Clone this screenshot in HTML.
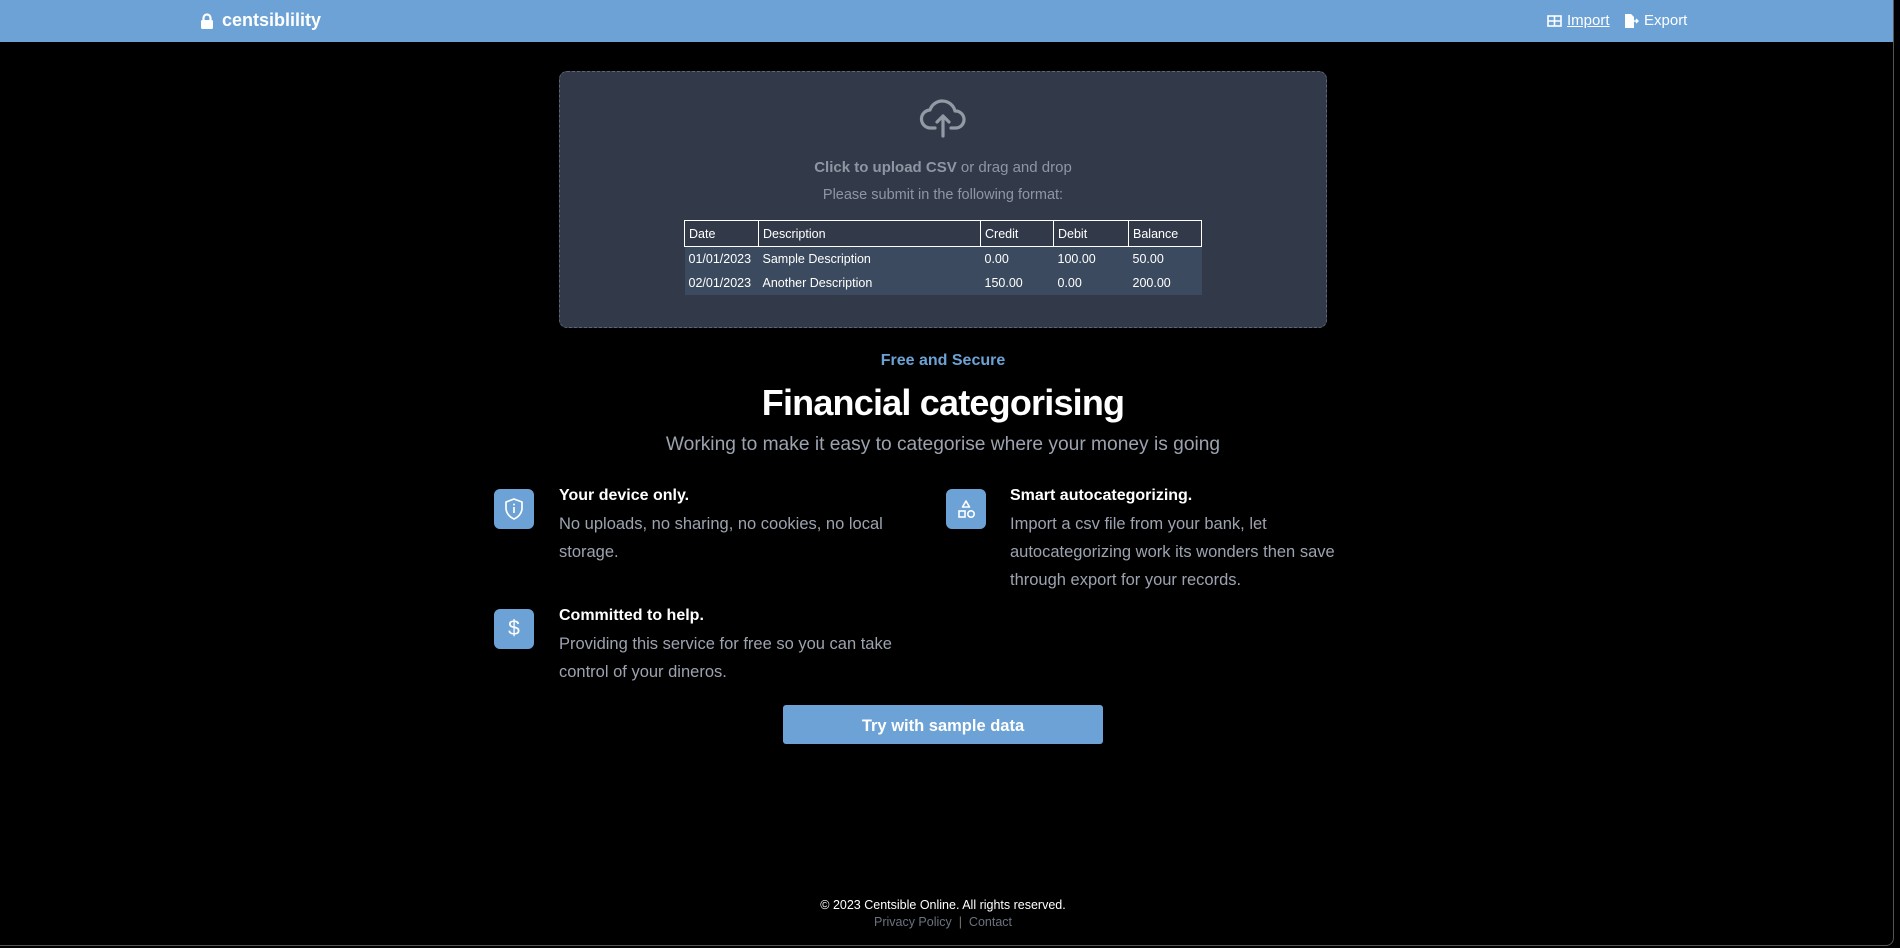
<!DOCTYPE html>
<html><head><meta charset="utf-8">
<style>
*{margin:0;padding:0;box-sizing:border-box}
html,body{width:1900px;height:948px;background:#000;overflow:hidden;font-family:"Liberation Sans",sans-serif}
.abs{position:absolute}
.hdr{left:0;top:0;width:1893px;height:42px;background:#6ca2d5}
.frame{left:0;top:0;width:1894px;height:946px;border-right:1px solid #555;border-bottom:1px solid #555;border-bottom-right-radius:8px;pointer-events:none}
.logo{left:200px;top:10px;color:#fff;font-weight:bold;font-size:18px;display:flex;align-items:center;gap:8px}
.nav{top:12px;color:#fff;font-size:15px;display:flex;align-items:center;gap:5px}
.box{left:559px;top:71px;width:768px;height:257px;background:#323a49;border:1px dashed #5b6577;border-radius:8px}
.c{text-align:center;width:1886px;left:0}
table{border-collapse:collapse;font-size:12.5px;color:#fff}
th{border:1px solid #fff;text-align:left;font-weight:normal;padding:0 4px;height:26px;background:#323a49}
td{background:#3b4a5e;padding:0 4px;height:24px;white-space:nowrap}
.ic{width:40px;height:40px;background:#6ca2d5;border-radius:6px;display:flex;align-items:center;justify-content:center}
.ft{font-size:16px;color:#fff;font-weight:bold}
.fd{font-size:16.5px;color:#9ca3af;line-height:28px;width:370px}
</style></head><body>
<div class="abs hdr"></div>
<div class="abs logo"><svg width="14" height="16" viewBox="0 0 14 16"><path d="M3.5 7V5a3.5 3.5 0 0 1 7 0v2" fill="none" stroke="#fff" stroke-width="2.2"/><rect x="1" y="7" width="12" height="9" rx="1.5" fill="#fff"/></svg>centsiblility</div>
<div class="abs nav" style="left:1547px"><svg width="15" height="12" viewBox="0 0 15 12"><rect x="1" y="1" width="13" height="10" fill="none" stroke="#fff" stroke-width="1.6"/><path d="M1 6h13M7.5 1v10" stroke="#fff" stroke-width="1.6"/></svg><span style="text-decoration:underline">Import</span></div>
<div class="abs nav" style="left:1624px"><svg width="15" height="14" viewBox="0 0 15 14"><path d="M1 0h6l3 3v11H1z" fill="#fff"/><path d="M8 7h6M12 5l2 2-2 2" stroke="#fff" stroke-width="1.4" fill="none"/></svg><span>Export</span></div>
<div class="abs box"></div>
<svg class="abs" style="left:919px;top:96px" width="48" height="42" viewBox="0 0 48 42"><path d="M16 32H12a9 9 0 0 1-1-18 13 13 0 0 1 25 1 8 8 0 0 1 1 17h-5" fill="none" stroke="#939aa6" stroke-width="3.2" stroke-linecap="round" stroke-linejoin="round"/><path d="M24 40V20M18 26l6-6 6 6" fill="none" stroke="#939aa6" stroke-width="3.2" stroke-linecap="round" stroke-linejoin="round"/></svg>
<div class="abs c" style="top:159px;font-size:15px;color:#8f96a3"><b>Click to upload CSV</b> or drag and drop</div>
<div class="abs c" style="top:187px;font-size:14.5px;color:#8f96a3">Please submit in the following format:</div>
<table class="abs" style="left:684px;top:220px;width:518px">
<tr><th style="width:74px">Date</th><th style="width:222px">Description</th><th style="width:73px">Credit</th><th style="width:75px">Debit</th><th>Balance</th></tr>
<tr><td>01/01/2023</td><td>Sample Description</td><td>0.00</td><td>100.00</td><td>50.00</td></tr>
<tr><td>02/01/2023</td><td>Another Description</td><td>150.00</td><td>0.00</td><td>200.00</td></tr>
</table>
<div class="abs c" style="top:352px;font-size:16px;color:#6ca2d5;font-weight:bold">Free and Secure</div>
<div class="abs c" style="top:382px;font-size:36px;color:#fff;font-weight:bold;letter-spacing:-0.8px">Financial categorising</div>
<div class="abs c" style="top:434px;font-size:19.2px;color:#9ca3af">Working to make it easy to categorise where your money is going</div>

<div class="abs ic" style="left:494px;top:489px"><svg width="22" height="24" viewBox="0 0 22 24"><path d="M11 2l8 3v6c0 5-3.5 9-8 11-4.5-2-8-6-8-11V5z" fill="none" stroke="#fff" stroke-width="1.7" stroke-linejoin="round"/><path d="M11 10v6" stroke="#fff" stroke-width="1.7"/><circle cx="11" cy="7.5" r="1" fill="#fff"/></svg></div>
<div class="abs ft" style="left:559px;top:487px">Your device only.</div>
<div class="abs fd" style="left:559px;top:510px">No uploads, no sharing, no cookies, no local storage.</div>

<div class="abs ic" style="left:946px;top:489px"><svg width="22" height="24" viewBox="0 0 22 24"><path d="M11 4l3.5 6h-7z" fill="none" stroke="#fff" stroke-width="1.6" stroke-linejoin="round"/><rect x="4" y="14" width="6" height="6" fill="none" stroke="#fff" stroke-width="1.6"/><circle cx="16" cy="17" r="3.2" fill="none" stroke="#fff" stroke-width="1.6"/></svg></div>
<div class="abs ft" style="left:1010px;top:487px">Smart autocategorizing.</div>
<div class="abs fd" style="left:1010px;top:510px;width:380px">Import a csv file from your bank, let autocategorizing work its wonders then save through export for your records.</div>

<div class="abs ic" style="left:494px;top:609px"><span style="color:#fff;font-size:21px">$</span></div>
<div class="abs ft" style="left:559px;top:607px">Committed to help.</div>
<div class="abs fd" style="left:559px;top:630px">Providing this service for free so you can take control of your dineros.</div>

<div class="abs" style="left:783px;top:705px;width:320px;height:39px;background:#6ca2d5;border-radius:3px;color:#fff;font-weight:bold;font-size:16.5px;display:flex;align-items:center;justify-content:center;padding-top:3px">Try with sample data</div>

<div class="abs c" style="top:898px;font-size:12.5px;color:#fff">© 2023 Centsible Online. All rights reserved.</div>
<div class="abs c" style="top:915px;font-size:12.5px;color:#6b7280">Privacy Policy &nbsp;<span style="color:#777">|</span>&nbsp; Contact</div>
<div class="abs frame"></div>
</body></html>
